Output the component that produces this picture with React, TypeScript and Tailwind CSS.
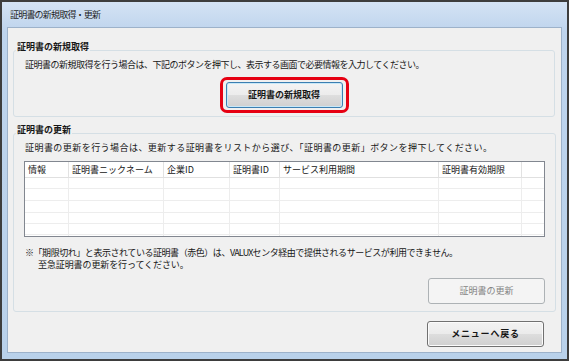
import React from "react";

const COLS = [44, 95, 66, 50, 159, 83, 22];
const HEAD = ["情報", "証明書ニックネーム", "企業ID", "証明書ID", "サービス利用期間", "証明書有効期限", ""];
const ROW_H = ["h-[11px]", "h-[12px]", "h-[12px]", "h-[11px]", "h-[11px]", "h-[6px]"];

function Cells({ head }: { head: boolean }) {
  return (
    <>
      {COLS.map((w, i) => (
        <div
          key={i}
          style={{ width: w }}
          className={
            "shrink-0 h-full pl-[3px] whitespace-nowrap overflow-hidden " +
            (i < COLS.length - 1 ? (head ? "border-r border-[#e2e2e2]" : "border-r border-[#ededed]") : "")
          }
        >
          {head ? HEAD[i] : ""}
        </div>
      ))}
    </>
  );
}

export default function App() {
  return (
    <div className="w-[569px] h-[361px] overflow-hidden">
      <div className="w-[569px] h-[361px] border-2 border-[#3d3d3d] bg-[linear-gradient(to_bottom,#d4e3f4,#bed4ed_30px,#b9d1ea)] flex flex-col font-['Noto_Sans_CJK_JP','Noto_Sans',sans-serif] text-[9px] leading-[12px] text-[#161616]">
        <div className="h-[25px] shrink-0 flex items-center pl-[8px] tracking-[-0.8px] text-[#1e1e1e]">
          証明書の新規取得・更新
        </div>
        <div className="flex-1 mx-[5px] mb-[6px] border border-[#9db2ca] bg-[#f0f0f0] flex flex-col">
          {/* group 1 */}
          <fieldset className="mt-[16px] ml-[5px] mr-[6px] border border-[#d5dfe5] rounded-[3px] p-0">
            <legend className="ml-[2px] px-[1px] font-bold leading-[12px] relative -top-[3px]">証明書の新規取得</legend>
            <div className="px-[10px] pt-[3px] pb-[3px]">
              <div className="pl-[1px] tracking-[-0.5px] whitespace-nowrap">
                証明書の新規取得を行う場合は、下記のボタンを押下し、表示する画面で必要情報を入力してください。
              </div>
              <div className="mt-[6px] flex justify-center">
                <div className="border-[3px] border-[#e60012] rounded-[7px] px-[3px] py-[2px]">
                  <div className="w-[117px] h-[26px] border border-[#3c7fb1] rounded-[3px] shadow-[inset_0_0_0_1px_#c8e8f8] bg-[linear-gradient(to_bottom,#f4f4f4_0%,#ececec_50%,#dedede_51%,#d0d0d0_100%)] flex items-center justify-center font-bold">
                    証明書の新規取得
                  </div>
                </div>
              </div>
            </div>
          </fieldset>

          {/* group 2 */}
          <fieldset className="mt-[10px] ml-[5px] mr-[6px] border border-[#d5dfe5] rounded-[3px] p-0">
            <legend className="ml-[2px] px-[1px] font-bold leading-[12px] relative -top-[3px]">証明書の更新</legend>
            <div className="px-[10px] pt-[3px] pb-[7px]">
              <div className="pl-[1px] tracking-[0.45px] whitespace-nowrap">
                証明書の更新を行う場合は、更新する証明書をリストから選び、「証明書の更新」ボタンを押下してください。
              </div>
              <div className="mt-[7px] h-[76px] border border-[#828790] bg-white overflow-hidden flex flex-col">
                <div className="h-[16px] shrink-0 flex items-center border-b border-[#e0e0e0] leading-[15px]">
                  <Cells head={true} />
                </div>
                {ROW_H.map((h, i) => (
                  <div key={i} className={h + " shrink-0 flex border-b border-[#ededed]"}>
                    <Cells head={false} />
                  </div>
                ))}
              </div>
              <div className="mt-[10px] pl-[1px] whitespace-nowrap">
                <div className="tracking-[-0.45px]">
                  ※「期限切れ」と表示されている証明書（赤色）は、<span className="tracking-[-0.8px]">VALUX</span>センタ経由で提供されるサービスが利用できません。
                </div>
                <div className="pl-[13px] tracking-[-0.1px]">至急証明書の更新を行ってください。</div>
              </div>
              <div className="mt-[7px] flex justify-end">
                <div className="w-[117px] h-[26px] border border-[#adb2b5] rounded-[3px] bg-[#f4f4f4] flex items-center justify-center text-[#838383]">
                  証明書の更新
                </div>
              </div>
            </div>
          </fieldset>

          <div className="mt-[9px] flex justify-end pr-[17px]">
            <div className="w-[117px] h-[26px] border border-[#707070] rounded-[3px] shadow-[inset_0_0_0_1px_#fbfbfb] bg-[linear-gradient(to_bottom,#f2f2f2_0%,#ebebeb_50%,#dddddd_51%,#cfcfcf_100%)] flex items-center justify-center font-bold tracking-[0.8px]">
              メニューへ戻る
            </div>
          </div>
        </div>
      </div>
    </div>
  );
}
